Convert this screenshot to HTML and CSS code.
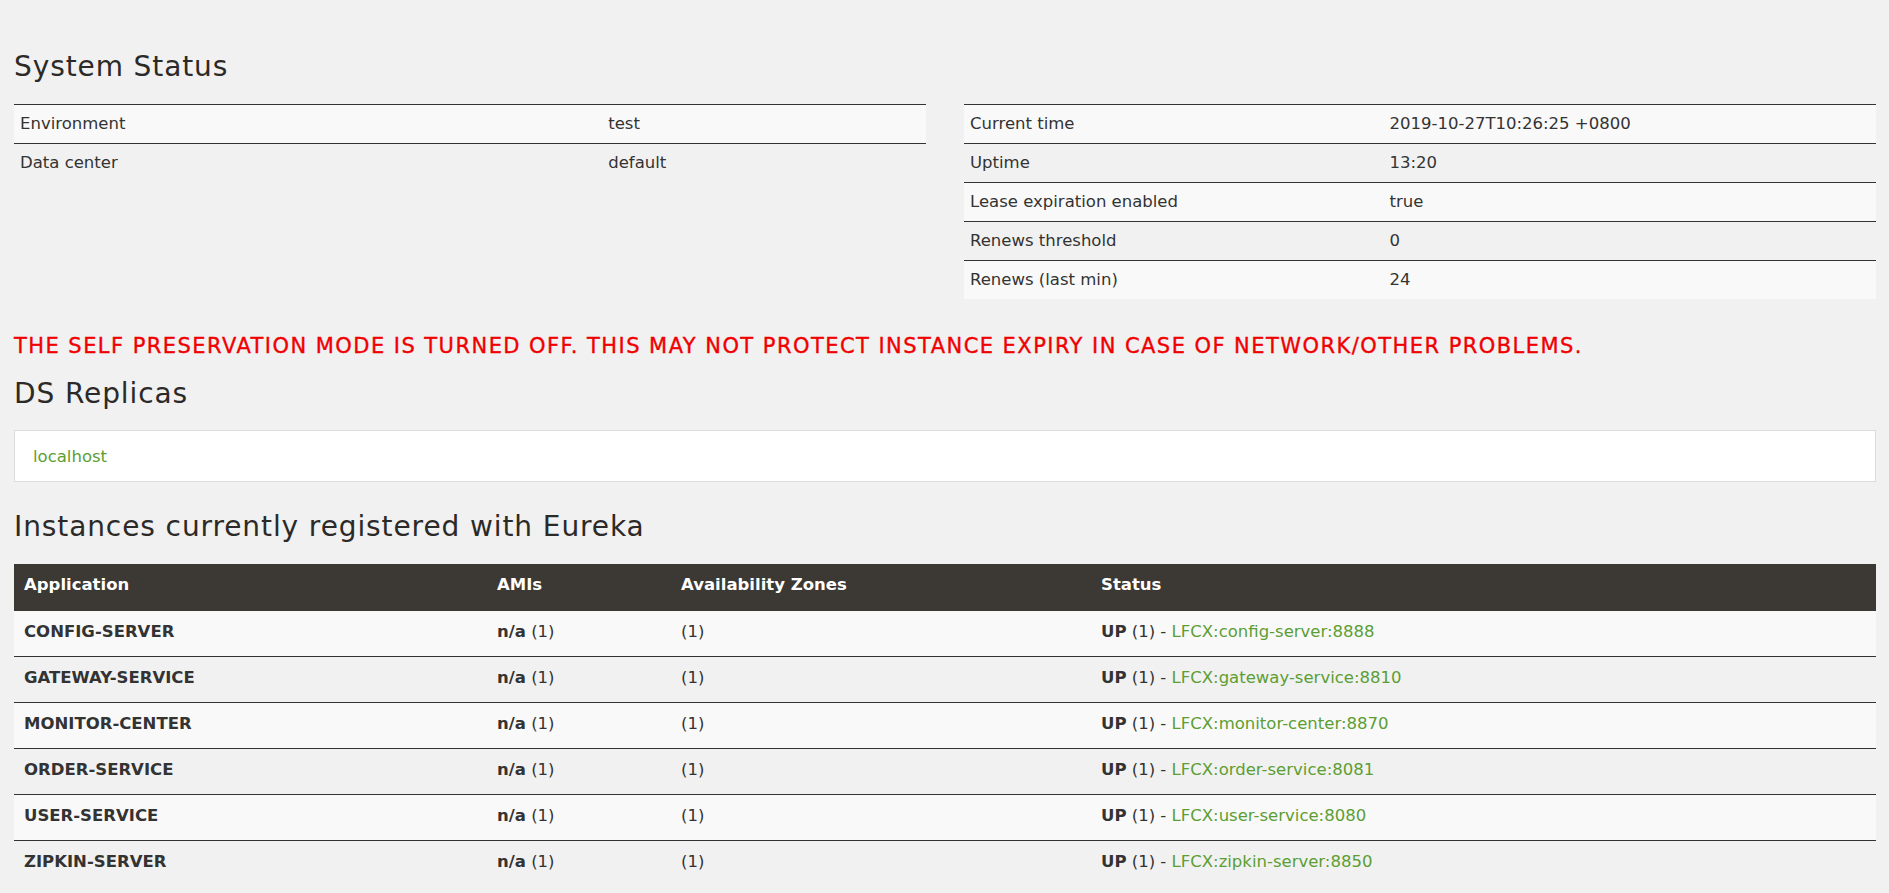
FILE: index.html
```html
<!DOCTYPE html>
<html>
<head>
<meta charset="utf-8">
<title>Eureka</title>
<link rel="stylesheet" href="styles.css">
</head>
<body>
<div class="page">
  <h2 class="title first">System Status</h2>
  <div class="status-grid">
    <table class="kv kv-left">
      <tbody>
        <tr><td class="key">Environment</td><td>test</td></tr>
        <tr><td class="key">Data center</td><td>default</td></tr>
      </tbody>
    </table>
    <table class="kv kv-right">
      <tbody>
        <tr><td class="key">Current time</td><td>2019-10-27T10:26:25 +0800</td></tr>
        <tr><td class="key">Uptime</td><td>13:20</td></tr>
        <tr><td class="key">Lease expiration enabled</td><td>true</td></tr>
        <tr><td class="key">Renews threshold</td><td>0</td></tr>
        <tr><td class="key">Renews (last min)</td><td>24</td></tr>
      </tbody>
    </table>
  </div>

  <h4 class="warning">THE SELF PRESERVATION MODE IS TURNED OFF. THIS MAY NOT PROTECT INSTANCE EXPIRY IN CASE OF NETWORK/OTHER PROBLEMS.</h4>

  <h2 class="title ds">DS Replicas</h2>
  <div class="replicas"><a href="#">localhost</a></div>

  <h2 class="title inst">Instances currently registered with Eureka</h2>
  <table class="instances">
    <colgroup>
      <col class="c-app"><col class="c-ami"><col class="c-zone"><col class="c-status">
    </colgroup>
    <thead>
      <tr><th>Application</th><th>AMIs</th><th>Availability Zones</th><th>Status</th></tr>
    </thead>
    <tbody>
      <tr><td><b>CONFIG-SERVER</b></td><td><b>n/a</b> (1)</td><td>(1)</td><td><b>UP</b> (1) - <a href="#">LFCX:config-server:8888</a></td></tr>
      <tr><td><b>GATEWAY-SERVICE</b></td><td><b>n/a</b> (1)</td><td>(1)</td><td><b>UP</b> (1) - <a href="#">LFCX:gateway-service:8810</a></td></tr>
      <tr><td><b>MONITOR-CENTER</b></td><td><b>n/a</b> (1)</td><td>(1)</td><td><b>UP</b> (1) - <a href="#">LFCX:monitor-center:8870</a></td></tr>
      <tr><td><b>ORDER-SERVICE</b></td><td><b>n/a</b> (1)</td><td>(1)</td><td><b>UP</b> (1) - <a href="#">LFCX:order-service:8081</a></td></tr>
      <tr><td><b>USER-SERVICE</b></td><td><b>n/a</b> (1)</td><td>(1)</td><td><b>UP</b> (1) - <a href="#">LFCX:user-service:8080</a></td></tr>
      <tr><td><b>ZIPKIN-SERVER</b></td><td><b>n/a</b> (1)</td><td>(1)</td><td><b>UP</b> (1) - <a href="#">LFCX:zipkin-server:8850</a></td></tr>
    </tbody>
  </table>
</div>
</body>
</html>
```

FILE: styles.css
```css
html, body {
  margin: 0;
  padding: 0;
  background: #f1f1f1;
  color: #333333;
  font-family: "DejaVu Sans", "Open Sans", "Liberation Sans", sans-serif;
  font-size: 16.5px;
}

.page {
  padding: 0 13px 0 14px;
}

a {
  color: #5c9e33;
  text-decoration: none;
}

.title {
  margin: 0;
  font-size: 28px;
  line-height: 34px;
  font-weight: 400;
  letter-spacing: 0.9px;
  color: #2b2a28;
}

.title.first { padding-top: 50px; }
.title.ds { margin-top: 17px; }
.title.inst { margin-top: 28px; }

.status-grid {
  display: grid;
  grid-template-columns: 1fr 1fr;
  column-gap: 38px;
  align-items: start;
  margin-top: 20px;
}

table {
  border-collapse: collapse;
  width: 100%;
}

.kv td {
  border-top: 1px solid #333333;
  padding: 7px 6px 7px 6px;
  line-height: 24px;
}

.kv tr:nth-child(odd) td {
  background: #f9f9f9;
}

.kv-left td.key { width: 64.5%; }
.kv-right td.key { width: 46%; }

.warning {
  margin: 33px 0 0 0;
  color: #f00000;
  font-size: 21px;
  line-height: 28px;
  font-weight: 400;
  letter-spacing: 1.45px;
  -webkit-text-stroke: 0.35px #f00000;
}

.replicas {
  margin-top: 19px;
  background: #ffffff;
  border: 1px solid #dcdcdc;
  padding: 14px 18px 12px 18px;
  line-height: 24px;
}

.instances {
  margin-top: 20px;
  table-layout: fixed;
}

.c-app { width: 473px; }
.c-ami { width: 184px; }
.c-zone { width: 420px; }

.instances th {
  background: #3c3834;
  color: #ffffff;
  text-align: left;
  font-weight: 700;
  padding: 9px 10px 13px 10px;
  line-height: 24px;
}

.instances td {
  border-top: 1px solid #333333;
  padding: 9px 10px 12px 10px;
  line-height: 24px;
}

.instances tbody tr:first-child td {
  border-top-color: #3c3834;
}

.instances tbody tr:nth-child(odd) td {
  background: #f9f9f9;
}
```
